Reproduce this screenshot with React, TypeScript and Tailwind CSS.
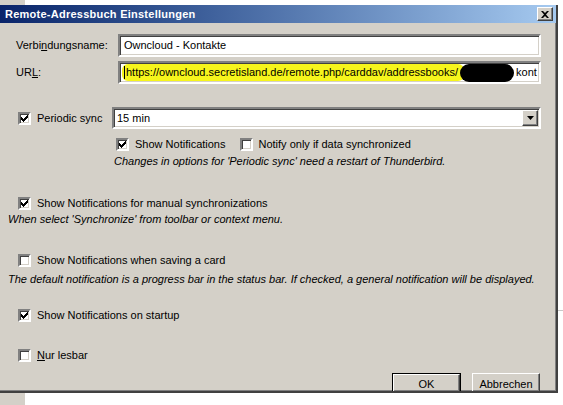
import React from 'react';

const sunken =
  'border-2 border-t-[#808080] border-l-[#808080] border-b-white border-r-white shadow-[inset_1px_1px_0_#404040,inset_-1px_-1px_0_#d4d0c8]';
const raised =
  'border border-t-white border-l-white border-b-[#404040] border-r-[#404040] shadow-[inset_-1px_-1px_0_#808080]';

const CheckBox: React.FC<{ checked?: boolean }> = ({ checked }) => (
  <div className={`w-[13px] h-[13px] shrink-0 bg-white flex items-center justify-center ${sunken}`}>
    {checked && (
      <svg width="7" height="7" viewBox="0 0 7 7">
        <path d="M0 2h1v1h1v1h1V3h1V2h1V1h1V0h1v3H6v1H5v1H4v1H3v1H2V6H1V5H0z" fill="#000" />
      </svg>
    )}
  </div>
);

const CheckRow: React.FC<{ checked?: boolean; children: React.ReactNode; className?: string }> = ({
  checked,
  children,
  className = '',
}) => (
  <div className={`flex items-center h-4 gap-[6px] ${className}`}>
    <CheckBox checked={checked} />
    <span className="whitespace-nowrap">{children}</span>
  </div>
);

const Note: React.FC<{ children: React.ReactNode; className?: string }> = ({ children, className = '' }) => (
  <div className={`h-3 leading-3 italic whitespace-nowrap ${className}`}>{children}</div>
);

export default function App() {
  return (
    <div className="w-[563px] h-[405px] overflow-hidden bg-white text-black text-[11px] [font-family:'Liberation_Sans',Arial,sans-serif]">
      <div className="h-[5px] flex">
        <div className="w-[25px] bg-[#d4d0c8]" />
      </div>

      <div className="flex">
        <div className="w-[558px] h-[388px] flex flex-col bg-[#d4d0c8] border-r-2 border-b-2 border-r-[#404040] border-b-[#404040] shadow-[inset_-1px_-1px_0_#808080]">
          {/* title bar */}
          <div className="h-[18px] shrink-0 flex items-center justify-between pl-[5px] pr-[3px] bg-gradient-to-r from-[#0a246a] to-[#a6caf0]">
            <span className="text-white font-bold text-[11px] tracking-[0.25px]">Remote-Adressbuch Einstellungen</span>
            <div className={`w-4 h-[14px] bg-[#d4d0c8] flex items-center justify-center ${raised}`}>
              <svg width="8" height="7" viewBox="0 0 8 7">
                <path d="M0 0h2l2 2 2-2h2L5 3.5 8 7H6L4 5 2 7H0l3-3.5z" fill="#000" />
              </svg>
            </div>
          </div>

          {/* body */}
          <div className="flex-1 overflow-hidden flex flex-col pt-[11px]">
            <div className="flex items-center h-[23px]">
              <span className="w-[118px] pl-4">
                Verbi<u>n</u>dungsname:
              </span>
              <div className={`w-[423px] h-[23px] bg-white flex items-center pl-[4px] ${sunken}`}>
                Owncloud - Kontakte
              </div>
            </div>
            <div className="flex items-center h-[23px] mt-1">
              <span className="w-[118px] pl-4">
                UR<u>L</u>:
              </span>
              <div className={`w-[423px] h-[23px] bg-white flex items-center pl-[2px] overflow-hidden whitespace-nowrap ${sunken}`}>
                <span className="bg-[#f6f51c] rounded-[6px] pl-[2px] pr-[6px] leading-[17px] flex items-center">
                  <span className="w-px h-[13px] bg-black mr-px" />
                  https://owncloud.secretisland.de/remote.php/carddav/addressbooks/
                </span>
                <span className="inline-block w-[54px] h-[18px] rounded-[9px] bg-black -ml-[4px]" />
                <span className="ml-[2px]">kont</span>
              </div>
            </div>

            <div className="flex items-center h-[22px] mt-[23px] pl-[18px]">
              <CheckRow checked className="w-[94px]">
                Periodic sync
              </CheckRow>
              <div className={`w-[429px] h-[22px] bg-white flex items-center justify-between pl-[3px] pr-[1px] ${sunken}`}>
                <span>15 min</span>
                <div className={`w-4 h-4 bg-[#d4d0c8] flex items-center justify-center ${raised}`}>
                  <svg width="7" height="4" viewBox="0 0 7 4">
                    <path d="M0 0h7L3.5 4z" fill="#000" />
                  </svg>
                </div>
              </div>
            </div>

            <div className="flex items-center mt-[7px] pl-[116px] gap-[14px]">
              <CheckRow checked>Show Notifications</CheckRow>
              <CheckRow>Notify only if data synchronized</CheckRow>
            </div>
            <Note className="mt-[3px] pl-[114px]">Changes in options for 'Periodic sync' need a restart of Thunderbird.</Note>

            <CheckRow checked className="mt-[28px] pl-[18px]">
              Show Notifications for manual synchronizations
            </CheckRow>
            <Note className="mt-[2px] pl-[8px]">When select 'Synchronize' from toolbar or context menu.</Note>

            <CheckRow className="mt-[27px] pl-[18px]">Show Notifications when saving a card</CheckRow>
            <Note className="mt-[5px] pl-[8px]">
              The default notification is a progress bar in the status bar. If checked, a general notification will be displayed.
            </Note>

            <CheckRow checked className="mt-[22px] pl-[18px]">
              Show Notifications on startup
            </CheckRow>

            <CheckRow className="mt-6 pl-[18px]">
              <u>N</u>ur lesbar
            </CheckRow>

            <div className="flex mt-[10px] pl-[392px] gap-[11px]">
              <div className="w-[69px] h-[23px] border border-black flex">
                <div className={`flex-1 flex items-center justify-center ${raised}`}>OK</div>
              </div>
              <div className={`w-[68px] h-[23px] flex items-center justify-center ${raised}`}>Abbrechen</div>
            </div>
          </div>
        </div>
        <div className="flex-1 pt-[305px]">
          <div className="h-px bg-[#c8c8c8]" />
        </div>
      </div>

      <div className="h-[12px] flex">
        <div className="w-[25px] bg-[#d4d0c8]" />
      </div>
    </div>
  );
}
